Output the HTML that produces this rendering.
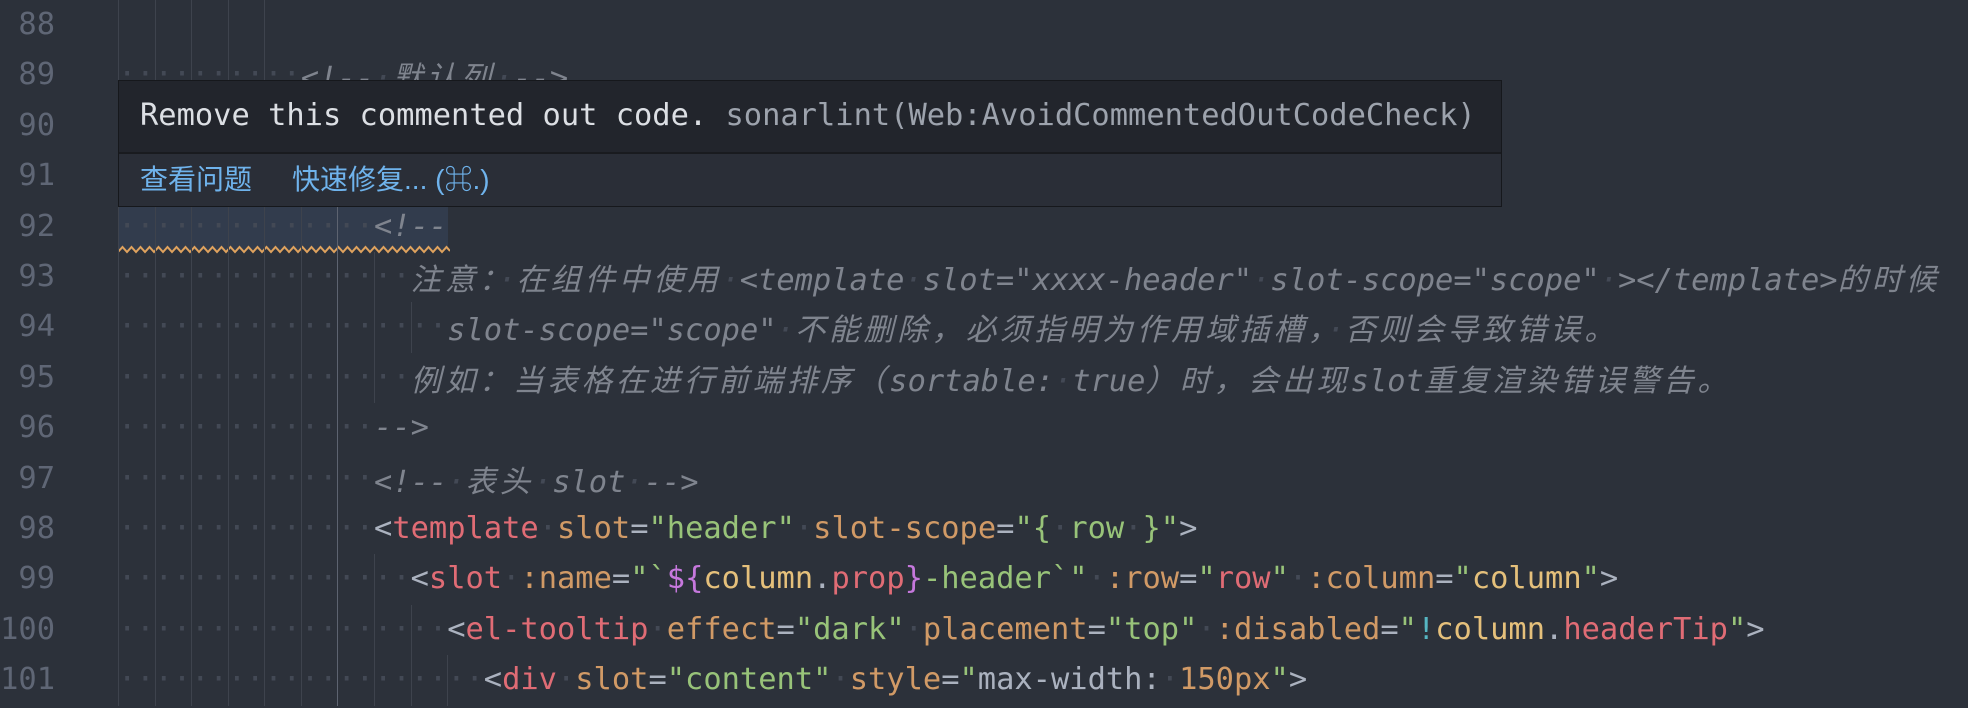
<!DOCTYPE html>
<html><head><meta charset="utf-8">
<style>
html,body{margin:0;padding:0;width:1968px;height:708px;overflow:hidden;background:#2c313a;}
body{position:relative;font-family:"DejaVu Sans Mono","Liberation Mono","Noto Sans CJK SC",monospace;font-size:30.4px;color:#abb2bf;}
.l{position:absolute;left:0;height:50.4px;line-height:50.4px;white-space:pre;width:1968px;}
.n{position:absolute;right:1913px;color:#5f6675;text-align:right;}
.c{position:absolute;left:118px;}
i{font-style:normal;display:inline-block;width:2ch;color:#434955;box-shadow:inset 1px 0 0 #3e434d;height:50.4px;vertical-align:top;}
i.b{box-shadow:inset 1px 0 0 #5d6370;}
.d{color:#434955;}
.cm{color:#7f848e;font-style:italic;}
.z{font-family:"Noto Sans CJK SC",sans-serif;letter-spacing:3.8px;font-style:italic;}
.t{color:#e06c75}.a{color:#d19a66}.s{color:#98c379}.p{color:#c678dd}.y{color:#e5c07b}.k{color:#56b6c2}.g{color:#abb2bf}
#hl{position:absolute;left:118px;top:206px;width:330px;height:44px;background:#323c4d;}
#tip{position:absolute;left:118px;top:80px;width:1382px;height:125px;border:1px solid #16181c;background:#2a2e37;}
#tip .top{height:71px;background:#22252c;border-bottom:2px solid #191b1f;line-height:70px;padding-left:21px;color:#dcdfe4;white-space:pre;}
#tip .top span{color:#9da3ad;}
#tip .bot{line-height:52px;padding-left:21px;font-family:"Liberation Sans","Noto Sans CJK SC",sans-serif;font-size:28px;color:#6fb3ec;}
</style></head><body>
<div id="hl"></div>
<svg style="position:absolute;left:118px;top:244px" width="332" height="12"><path d="M0 8 L4.5 3 L9 8 L13.5 3 L18 8 L22.5 3 L27 8 L31.5 3 L36 8 L40.5 3 L45 8 L49.5 3 L54 8 L58.5 3 L63 8 L67.5 3 L72 8 L76.5 3 L81 8 L85.5 3 L90 8 L94.5 3 L99 8 L103.5 3 L108 8 L112.5 3 L117 8 L121.5 3 L126 8 L130.5 3 L135 8 L139.5 3 L144 8 L148.5 3 L153 8 L157.5 3 L162 8 L166.5 3 L171 8 L175.5 3 L180 8 L184.5 3 L189 8 L193.5 3 L198 8 L202.5 3 L207 8 L211.5 3 L216 8 L220.5 3 L225 8 L229.5 3 L234 8 L238.5 3 L243 8 L247.5 3 L252 8 L256.5 3 L261 8 L265.5 3 L270 8 L274.5 3 L279 8 L283.5 3 L288 8 L292.5 3 L297 8 L301.5 3 L306 8 L310.5 3 L315 8 L319.5 3 L324 8 L328.5 3 L332 7" fill="none" stroke="#e0a35e" stroke-width="2"/></svg>

<div class="l" style="top:0"><span class="n">88</span><span class="c"><i> </i><i> </i><i> </i><i> </i><i> </i></span></div>
<div class="l" style="top:50.4px"><span class="n">89</span><span class="c"><i>··</i><i>··</i><i>··</i><i>··</i><i>··</i><span class="cm">&lt;!--<span class="d">·</span><span class="z">默认列</span><span class="d">·</span>--&gt;</span></span></div>
<div class="l" style="top:100.8px"><span class="n">90</span></div>
<div class="l" style="top:151.2px"><span class="n">91</span></div>
<div class="l" style="top:201.6px"><span class="n">92</span><span class="c"><i>··</i><i>··</i><i>··</i><i>··</i><i>··</i><i>··</i><i class="b">··</i><span class="cm">&lt;!--</span></span></div>
<div class="l" style="top:252px"><span class="n">93</span><span class="c"><i>··</i><i>··</i><i>··</i><i>··</i><i>··</i><i>··</i><i class="b">··</i><i>··</i><span class="cm"><span class="z">注意：</span><span class="d">·</span><span class="z">在组件中使用</span><span class="d">·</span>&lt;template<span class="d">·</span>slot="xxxx-header"<span class="d">·</span>slot-scope="scope"<span class="d">·</span>&gt;&lt;/template&gt;<span class="z">的时候</span></span></span></div>
<div class="l" style="top:302.4px"><span class="n">94</span><span class="c"><i>··</i><i>··</i><i>··</i><i>··</i><i>··</i><i>··</i><i class="b">··</i><i>··</i><i>··</i><span class="cm">slot-scope="scope"<span class="d">·</span><span class="z">不能删除，必须指明为作用域插槽，</span><span class="d">·</span><span class="z">否则会导致错误。</span></span></span></div>
<div class="l" style="top:352.8px"><span class="n">95</span><span class="c"><i>··</i><i>··</i><i>··</i><i>··</i><i>··</i><i>··</i><i class="b">··</i><i>··</i><span class="cm"><span class="z">例如：当表格在进行前端排序（</span>sortable:<span class="d">·</span>true<span class="z">）时，会出现</span>slot<span class="z">重复渲染错误警告。</span></span></span></div>
<div class="l" style="top:403.2px"><span class="n">96</span><span class="c"><i>··</i><i>··</i><i>··</i><i>··</i><i>··</i><i>··</i><i class="b">··</i><span class="cm">--&gt;</span></span></div>
<div class="l" style="top:453.6px"><span class="n">97</span><span class="c"><i>··</i><i>··</i><i>··</i><i>··</i><i>··</i><i>··</i><i class="b">··</i><span class="cm">&lt;!--<span class="d">·</span><span class="z">表头</span><span class="d">·</span>slot<span class="d">·</span>--&gt;</span></span></div>
<div class="l" style="top:504px"><span class="n">98</span><span class="c"><i>··</i><i>··</i><i>··</i><i>··</i><i>··</i><i>··</i><i class="b">··</i>&lt;<span class="t">template</span><span class="d">·</span><span class="a">slot</span>=<span class="s">"header"</span><span class="d">·</span><span class="a">slot-scope</span>=<span class="s">"{<span class="d">·</span>row<span class="d">·</span>}"</span>&gt;</span></div>
<div class="l" style="top:554.4px"><span class="n">99</span><span class="c"><i>··</i><i>··</i><i>··</i><i>··</i><i>··</i><i>··</i><i class="b">··</i><i>··</i>&lt;<span class="t">slot</span><span class="d">·</span><span class="a">:name</span>=<span class="s">"`</span><span class="p">${</span><span class="y">column</span>.<span class="t">prop</span><span class="p">}</span><span class="s">-header`"</span><span class="d">·</span><span class="a">:row</span>=<span class="s">"</span><span class="t">row</span><span class="s">"</span><span class="d">·</span><span class="a">:column</span>=<span class="s">"</span><span class="y">column</span><span class="s">"</span>&gt;</span></div>
<div class="l" style="top:604.8px"><span class="n">100</span><span class="c"><i>··</i><i>··</i><i>··</i><i>··</i><i>··</i><i>··</i><i class="b">··</i><i>··</i><i>··</i>&lt;<span class="t">el-tooltip</span><span class="d">·</span><span class="a">effect</span>=<span class="s">"dark"</span><span class="d">·</span><span class="a">placement</span>=<span class="s">"top"</span><span class="d">·</span><span class="a">:disabled</span>=<span class="s">"</span><span class="k">!</span><span class="y">column</span>.<span class="t">headerTip</span><span class="s">"</span>&gt;</span></div>
<div class="l" style="top:655.2px"><span class="n">101</span><span class="c"><i>··</i><i>··</i><i>··</i><i>··</i><i>··</i><i>··</i><i class="b">··</i><i>··</i><i>··</i><i>··</i>&lt;<span class="t">div</span><span class="d">·</span><span class="a">slot</span>=<span class="s">"content"</span><span class="d">·</span><span class="a">style</span>=<span class="s">"</span>max-width:<span class="d">·</span><span class="a">150px</span><span class="s">"</span>&gt;</span></div>

<div id="tip">
<div class="top">Remove this commented out code. <span>sonarlint(Web:AvoidCommentedOutCodeCheck)</span></div>
<div class="bot">查看问题<span style="display:inline-block;width:40px"></span>快速修复... (⌘.)</div>
</div>
</body></html>
